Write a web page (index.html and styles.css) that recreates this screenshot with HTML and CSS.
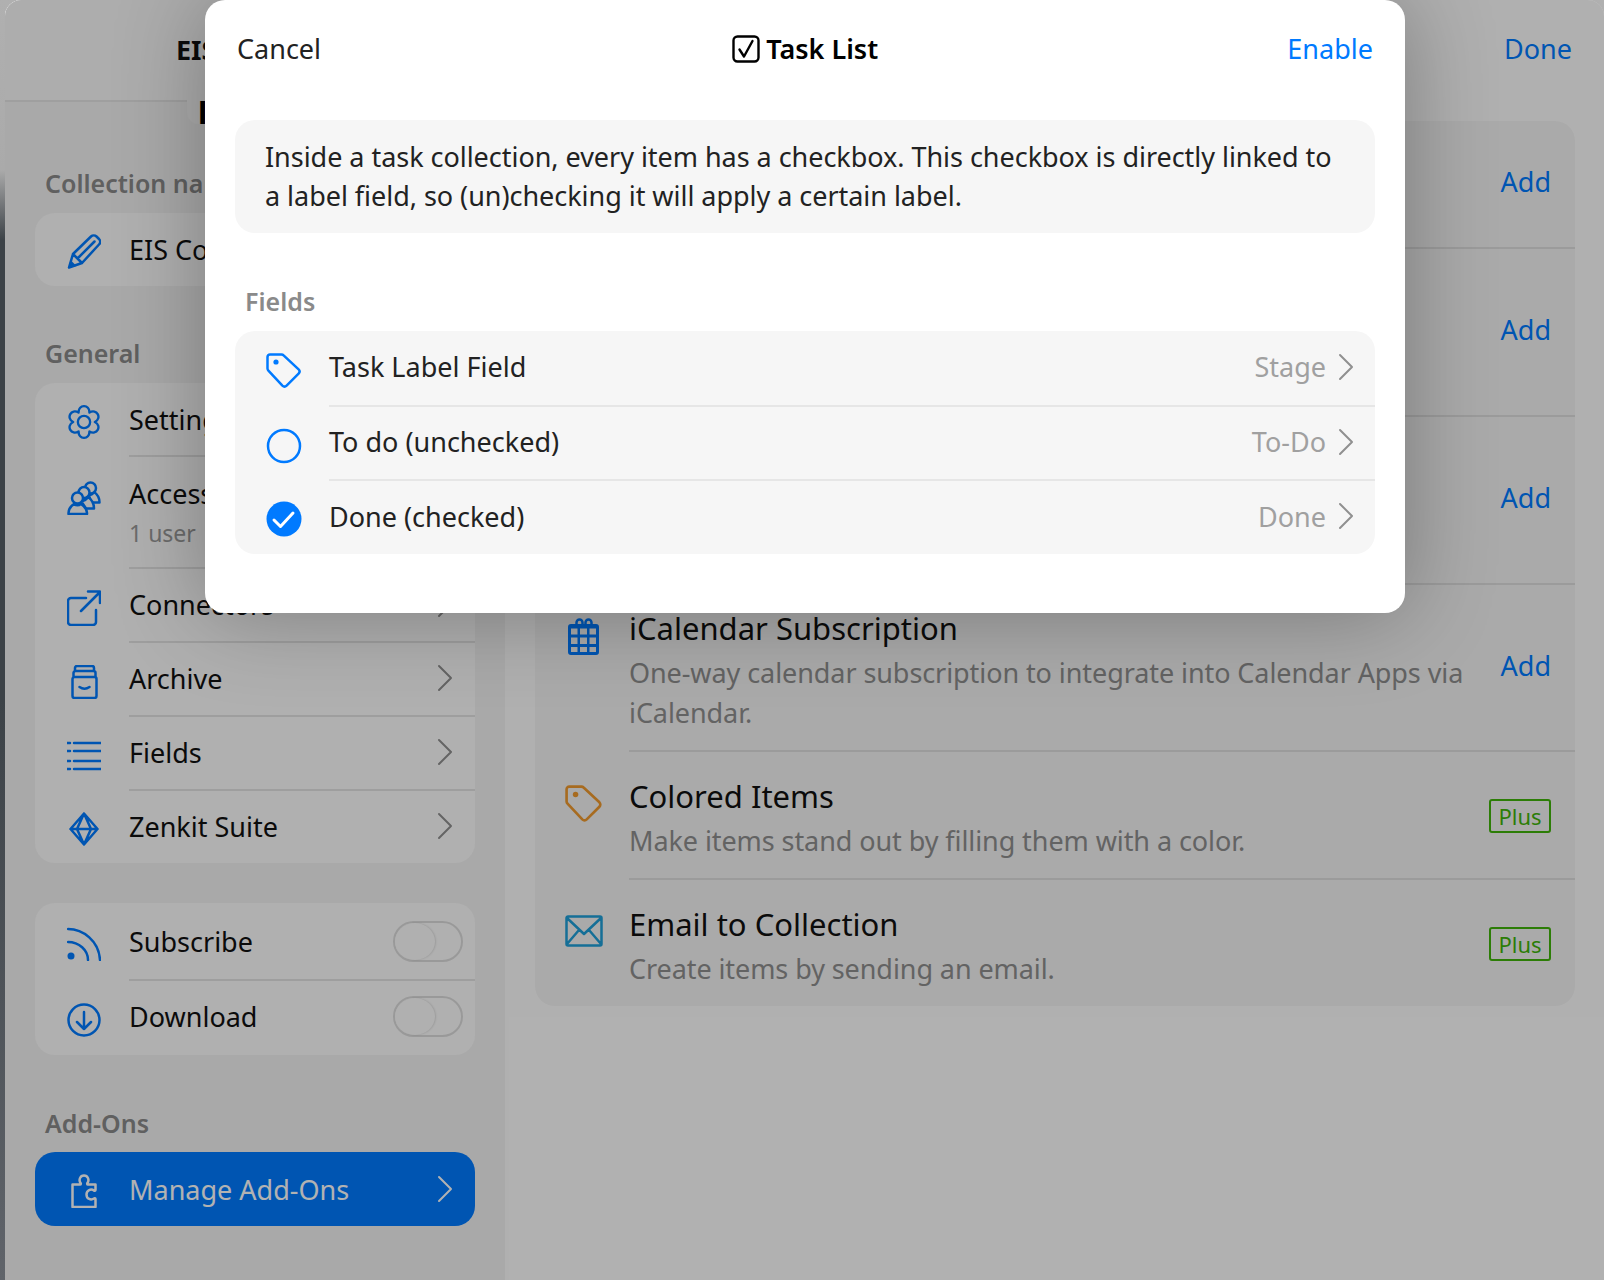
FILE: index.html
```html
<!DOCTYPE html>
<html lang="en">
<head>
    <meta charset="utf-8">
    <link rel="stylesheet" href="styles.css">
    <title>Manage Add-Ons</title>
</head>
<body>
    <svg class="defs" width="0" height="0">
        <symbol id="chev" viewBox="0 0 16 28"><path d="M2 2l12 12L2 26"/></symbol>
        <symbol id="tag" viewBox="0 0 36 36"><path d="M4 1.500H15.500a3 3 0 0 1 2.100.9L32.600 16.400a3 3 0 0 1 0 4.200L20.600 32.600a3 3 0 0 1-4.200 0L2.400 17.600a3 3 0 0 1-.9-2.100V4A2.500 2.500 0 0 1 4 1.500z"/><circle class="solid" cx="10" cy="9" r="2.600"/></symbol>
    </svg>

    <div class="app">
        <aside class="sidebar">
            <div class="side-head"><span class="side-title">EIS</span></div>
            <div class="name-pill">I</div>

            <h3 class="sec-label first">Collection name</h3>
            <div class="group">
                <div class="row one">
                    <div class="ico">
                        <svg width="34" height="36" viewBox="0 0 34 36"><path d="M2 34.500L6 21 24 3.500a4 4 0 0 1 5.500 0l2.500 2.500a4 4 0 0 1 0 5.500L15 30zM6 21l9 9M11 25L27.500 8.500"/><path class="solid" d="M1.500 35l2-8 6 6z"/></svg>
                    </div>
                    <div class="body"><span class="txt">EIS Collection</span></div>
                </div>
            </div>

            <h3 class="sec-label">General</h3>
            <div class="group">
                <div class="row">
                    <div class="ico">
                        <svg width="34" height="34" viewBox="-18 -18 36 36"><circle r="6.500"/><path d="M-5.750-9.960C-6.180-19.020 6.180-19.020 5.750-9.960 13.380-14.860 19.560-4.160 11.500 0 19.560 4.160 13.380 14.860 5.750 9.960 6.180 19.020-6.180 19.020-5.750 9.960-13.380 14.860-19.560 4.160-11.500 0-19.560-4.160-13.380-14.860-5.750-9.960z"/></svg>
                    </div>
                    <div class="body"><span class="txt">Settings</span></div>
                </div>
                <div class="row access">
                    <div class="ico top">
                        <svg width="34" height="34" viewBox="0 0 34 34"><path class="cut" d="M22 14c3 0 4-1 5-3 3 2 5.500 6 5.500 10.500H24z"/><circle class="cut" cx="23.500" cy="7" r="5.500"/><path class="cut" d="M14 20c3 0 5-1 7-4 3 2 6 6 6 11.500H19z"/><circle class="cut" cx="17" cy="11.500" r="5.500"/><path class="cut" d="M1.500 33v-1c0-4 2.500-7 5.500-9 2 1.500 5 1.500 7 0 3 2 6 5 6 9v1z"/><circle class="cut" cx="10.500" cy="17" r="5.500"/></svg>
                    </div>
                    <div class="body">
                        <div>
                            <div class="txt">Access</div>
                            <div class="sub">1 user</div>
                        </div>
                    </div>
                </div>
                <div class="row">
                    <div class="ico">
                        <svg width="34" height="36" viewBox="0 0 34 36"><path d="M19 8H4a3 3 0 0 0-3 3v21a3 3 0 0 0 3 3h22a3 3 0 0 0 3-3V20M14 21L33 2M21 1.500h12V13"/></svg>
                    </div>
                    <div class="body"><span class="txt">Connectors</span><svg class="chev"><use href="#chev"/></svg></div>
                </div>
                <div class="row">
                    <div class="ico">
                        <svg width="27" height="34" viewBox="0 0 27 34"><path d="M4 6V3a2 2 0 0 1 2-2h15a2 2 0 0 1 2 2v3M2.500 12V8a2 2 0 0 1 2-2h18a2 2 0 0 1 2 2v4M1.500 14a2 2 0 0 1 2-2h20a2 2 0 0 1 2 2v17a2 2 0 0 1-2 2H3.500a2 2 0 0 1-2-2zM8.500 22c3 2 7 2 10 0"/></svg>
                    </div>
                    <div class="body"><span class="txt">Archive</span><svg class="chev"><use href="#chev"/></svg></div>
                </div>
                <div class="row">
                    <div class="ico">
                        <svg width="34" height="30" viewBox="0 0 34 30"><path d="M7 2h27M7 10h27M7 20h27M7 28h27M0 2h3M0 10h3M0 20h3M0 28h3"/></svg>
                    </div>
                    <div class="body"><span class="txt">Fields</span><svg class="chev"><use href="#chev"/></svg></div>
                </div>
                <div class="row short">
                    <div class="ico">
                        <svg width="30" height="34" viewBox="0 0 30 34"><path d="M15 1.500L28.500 17 15 32.500 1.500 17zM1.500 17h27M15 1.500l-7 15.500 7 15.500 7-15.500z"/></svg>
                    </div>
                    <div class="body"><span class="txt">Zenkit Suite</span><svg class="chev"><use href="#chev"/></svg></div>
                </div>
            </div>

            <div class="group spaced">
                <div class="row tall">
                    <div class="ico">
                        <svg width="34" height="34" viewBox="0 0 34 34"><path d="M1 2c15 0 31 12 32 31M1 15c11 0 20 8 20 18"/><circle class="solid" cx="4" cy="29" r="3.500"/></svg>
                    </div>
                    <div class="body"><span class="txt">Subscribe</span><span class="toggle"><span class="knob"></span></span></div>
                </div>
                <div class="row">
                    <div class="ico">
                        <svg width="34" height="34" viewBox="0 0 34 34"><circle cx="17" cy="17" r="15.500"/><path d="M17 9v17M10 19l7 7 7-7"/></svg>
                    </div>
                    <div class="body lift"><span class="txt">Download</span><span class="toggle"><span class="knob"></span></span></div>
                </div>
            </div>

            <h3 class="sec-label addons">Add-Ons</h3>
            <div class="group active">
                <div class="row">
                    <div class="ico">
                        <svg width="26" height="34" viewBox="0 0 26 34"><path d="M1.500 10.500H9c1 0 1-1 .5-1.500-2-3-.5-7.500 3.500-7.500s5.500 4.500 3.500 7.500c-.5.5-.5 1.500.5 1.500h7.500V16c0 1-1 1-1.500.5-3-2-7.500-.5-7.500 4s4.500 6 7.500 4c.5-.5 1.500-.5 1.500.5v8h-23z"/></svg>
                    </div>
                    <div class="body"><span class="txt">Manage Add-Ons</span><svg class="chev"><use href="#chev"/></svg></div>
                </div>
            </div>
        </aside>

        <main class="content">
            <div class="content-head"><span class="done">Done</span></div>
            <div class="card">
                <div class="item short"><div class="item-ico"></div><div class="item-body"><div class="item-text"></div><span class="add">Add</span></div></div>
                <div class="item"><div class="item-ico"></div><div class="item-body"><div class="item-text"></div><span class="add">Add</span></div></div>
                <div class="item"><div class="item-ico"></div><div class="item-body"><div class="item-text"></div><span class="add">Add</span></div></div>
                <div class="item cal-row">
                    <div class="item-ico">
                        <svg class="cal" width="32" height="38" viewBox="0 0 32 38"><path class="cal-body" d="M3 6h25a3 3 0 0 1 3 3v25a3 3 0 0 1-3 3H3a3 3 0 0 1-3-3V9a3 3 0 0 1 3-3zM3 10.500v6h6.500v-6zM12 10.500v6h7v-6zM21.500 10.500v6H28v-6zM3 19.500v6.500h6.500v-6.500zM12 19.500v6.500h7v-6.500zM21.500 19.500v6.500H28v-6.500zM3 29v5h6.500v-5zM12 29v5h7v-5zM21.500 29v5H28v-5z"/><path d="M8.500 7V4.500a3 3 0 0 1 6 0V7M17.500 7V4.500a3 3 0 0 1 6 0V7"/></svg>
                    </div>
                    <div class="item-body">
                        <div class="item-text">
                            <div class="item-title">iCalendar Subscription</div>
                            <div class="item-desc">One-way calendar subscription to integrate into Calendar Apps via iCalendar.</div>
                        </div>
                        <span class="add">Add</span>
                    </div>
                </div>
                <div class="item">
                    <div class="item-ico">
                        <svg class="orange" width="38" height="38"><use href="#tag"/></svg>
                    </div>
                    <div class="item-body">
                        <div class="item-text">
                            <div class="item-title">Colored Items</div>
                            <div class="item-desc">Make items stand out by filling them with a color.</div>
                        </div>
                        <span class="plus">Plus</span>
                    </div>
                </div>
                <div class="item">
                    <div class="item-ico">
                        <svg class="teal" width="38" height="32" viewBox="0 0 38 32"><path d="M3 1.500h32a1.500 1.500 0 0 1 1.500 1.500v26a1.500 1.500 0 0 1-1.500 1.500H3A1.500 1.500 0 0 1 1.500 29V3A1.500 1.500 0 0 1 3 1.500zM2 3l17 16L36 3M2 29l12-14M36 29L24 15"/></svg>
                    </div>
                    <div class="item-body">
                        <div class="item-text">
                            <div class="item-title">Email to Collection</div>
                            <div class="item-desc">Create items by sending an email.</div>
                        </div>
                        <span class="plus">Plus</span>
                    </div>
                </div>
            </div>
        </main>

        <div class="dim"></div>
    </div>

    <section class="modal">
        <header class="modal-head">
            <span class="cancel">Cancel</span>
            <span class="modal-title">
                <svg class="box" width="28" height="28" viewBox="0 0 28 28"><rect x="1.500" y="1.500" width="25" height="25" rx="4"/><path d="M7.500 14.500l4.500 7L20.500 6"/></svg>
                Task List
            </span>
            <span class="enable">Enable</span>
        </header>
        <p class="info">Inside a task collection, every item has a checkbox. This checkbox is directly linked to a label field, so (un)checking it will apply a certain label.</p>
        <h3 class="fields-label">Fields</h3>
        <div class="m-group">
            <div class="m-row">
                <div class="m-ico"><svg class="blue" width="36" height="36"><use href="#tag"/></svg></div>
                <div class="m-body"><span>Task Label Field</span><span class="val">Stage</span><svg class="chev"><use href="#chev"/></svg></div>
            </div>
            <div class="m-row">
                <div class="m-ico"><svg class="blue" width="36" height="36" viewBox="0 0 36 36"><circle cx="18" cy="18" r="16"/></svg></div>
                <div class="m-body"><span>To do (unchecked)</span><span class="val">To-Do</span><svg class="chev"><use href="#chev"/></svg></div>
            </div>
            <div class="m-row">
                <div class="m-ico"><svg class="blue" width="36" height="36" viewBox="0 0 36 36"><circle class="solid" cx="18" cy="18" r="17.500"/><path class="tick" d="M8 19l6.500 6.500L27 12"/></svg></div>
                <div class="m-body"><span>Done (checked)</span><span class="val">Done</span><svg class="chev"><use href="#chev"/></svg></div>
            </div>
        </div>
    </section>
</body>
</html>
```

FILE: styles.css
```css
* {
    box-sizing: border-box;
}

body {
    margin: 0;
    height: 1280px;
    overflow: hidden;
    font-family: "Noto Sans", sans-serif;
    font-size: 27px;
    color: #111;
    background: linear-gradient(to bottom, #b0b0b0 0, #aaa 170px, #3c4247 240px, #3c4247 700px, #60646a 1280px);
}

svg {
    fill: none;
    stroke: currentColor;
    stroke-width: 2.5;
    stroke-linecap: round;
    stroke-linejoin: round;
}

.defs {
    position: absolute;
}

.solid {
    fill: currentColor;
    stroke: none;
}

.cut {
    fill: #fcfcfc;
}

.chev {
    width: 16px;
    height: 28px;
    color: #909090;
    stroke-width: 2;
    flex-shrink: 0;
}

/* app behind the sheet */
.app {
    position: relative;
    margin-left: 5px;
    height: 1280px;
    display: flex;
    overflow: hidden;
    border-radius: 16px 16px 0 0;
    background: #fdfdfd;
}

.dim {
    position: absolute;
    inset: 0;
    background: rgba(0, 0, 0, 0.3);
}

.sidebar {
    position: relative;
    width: 500px;
    padding: 0 30px;
    background: #f3f3f3;
}

.side-head {
    height: 102px;
    margin: 0 -30px;
    padding: 31px 0 0 171px;
    border-bottom: 2px solid #e4e4e4;
    background: #f8f8f8;
}

.side-title {
    font-weight: 700;
}

.name-pill {
    position: absolute;
    top: 98px;
    left: 182px;
    width: 60px;
    height: 26px;
    padding-left: 11px;
    border-radius: 0 0 12px 12px;
    background: #f8f8f8;
    font-family: "Liberation Sans", sans-serif;
    font-size: 34px;
    font-weight: 700;
    line-height: 28px;
    color: #000;
}

.sec-label {
    margin: 0;
    padding-left: 10px;
    height: 30px;
    font-size: 25px;
    line-height: 30px;
    font-weight: 600;
    color: #8a8a8a;
    white-space: nowrap;
}

.sec-label.first {
    margin-top: 66px;
    margin-bottom: 15px;
}

.sidebar .group + .sec-label {
    margin-top: 52px;
    margin-bottom: 15px;
}

.sidebar .group + .sec-label.addons {
    margin-top: 53px;
    margin-bottom: 14px;
}

.group {
    border-radius: 20px;
    background: #fcfcfc;
    overflow: hidden;
}

.group.spaced {
    margin-top: 40px;
}

.group.active {
    background: #007aff;
    color: #fff;
}

.group.active .ico,
.group.active .chev {
    color: #fff;
}

.row {
    display: flex;
    min-height: 74px;
}

.row.one {
    min-height: 73px;
}

.row.short {
    min-height: 72px;
}

.row.tall {
    min-height: 78px;
}

.row.access {
    min-height: 112px;
}

.ico {
    width: 94px;
    flex-shrink: 0;
    padding: 3px 0 0 4px;
    display: flex;
    align-items: center;
    justify-content: center;
    color: #007aff;
}

.ico.top {
    align-items: flex-start;
    padding-top: 24px;
}

.body {
    flex: 1;
    display: flex;
    align-items: center;
    justify-content: space-between;
    padding-right: 22px;
    border-bottom: 2px solid #e2e2e2;
}

.row:last-child .body {
    border-bottom: none;
}

.row.access ~ .row .body {
    padding-bottom: 2px;
}

.body.lift {
    padding-bottom: 4px;
}

.txt {
    white-space: nowrap;
}

.sub {
    margin-top: 5px;
    font-size: 23px;
    color: #9a9a9a;
}

.toggle {
    width: 70px;
    height: 41px;
    margin-right: -10px;
    border: 2px solid #dcdcdc;
    border-radius: 21px;
}

.knob {
    display: block;
    width: 40px;
    height: 37px;
    border-radius: 50%;
    box-shadow: 1px 0 2px rgba(0, 0, 0, 0.12);
    background: #fcfcfc;
}

/* right column */
.content {
    flex: 1;
    padding: 0 29px 0 30px;
}

.content-head {
    height: 121px;
    padding-top: 30px;
    padding-right: 3px;
    text-align: right;
}

.done {
    color: #007aff;
}

.card {
    border-radius: 20px;
    background: #f4f4f4;
}

.item {
    display: flex;
    height: 168px;
}

.item.short {
    height: 128px;
}

.item.cal-row {
    height: 167px;
}

.item:nth-child(5) {
    height: 128px;
}

.item:nth-child(6) {
    height: 126px;
}

.item-ico {
    width: 94px;
    flex-shrink: 0;
    padding: 33px 0 0 4px;
    display: flex;
    justify-content: center;
    align-items: flex-start;
}

.cal {
    color: #007aff;
}

.cal-body {
    fill: currentColor;
    fill-rule: evenodd;
    stroke: none;
}

.orange {
    color: #ef9a2e;
}

.teal {
    color: #1f9fd8;
    margin-top: 2px;
}

.item-body {
    flex: 1;
    display: flex;
    align-items: center;
    justify-content: space-between;
    padding-right: 24px;
    border-bottom: 2px solid #dedede;
}

.item:last-child .item-body {
    border-bottom: none;
}

.item-text {
    width: 850px;
    padding-top: 6px;
}

.item-title {
    font-size: 31px;
    line-height: 40px;
}

.item-desc {
    margin-top: 5px;
    font-size: 27px;
    line-height: 40px;
    letter-spacing: -0.08px;
    color: #8e8e8e;
}

.add {
    padding-bottom: 5px;
    color: #007aff;
}

.plus {
    width: 62px;
    height: 34px;
    margin-top: 2px;
    border: 2px solid #3fb30a;
    border-radius: 3px;
    font-size: 22px;
    line-height: 30px;
    text-align: center;
    color: #3fb30a;
}

/* sheet */
.modal {
    position: absolute;
    top: 0;
    left: 205px;
    width: 1200px;
    height: 613px;
    padding: 0 30px;
    border-radius: 20px;
    background: #fff;
    box-shadow: 0 0 90px rgba(0, 0, 0, 0.3);
    color: #222;
}

.modal-head {
    height: 120px;
    padding: 30px 2px 0;
    display: flex;
    justify-content: space-between;
}

.cancel,
.enable {
    line-height: 38px;
}

.enable {
    color: #007aff;
}

.modal-title {
    display: flex;
    align-items: flex-start;
    gap: 6px;
    margin-left: 2px;
    line-height: 38px;
    font-weight: 600;
    color: #000;
}

.box {
    margin-top: 5px;
    stroke-width: 2.400;
}

.info {
    margin: 0;
    height: 113px;
    padding: 17px 30px;
    border-radius: 20px;
    background: #f6f6f6;
    line-height: 39px;
    letter-spacing: -0.035px;
}

.fields-label {
    margin: 0;
    padding: 53px 0 15px 10px;
    font-size: 25px;
    line-height: 30px;
    font-weight: 600;
    color: #8a8a8a;
}

.m-group {
    border-radius: 20px;
    background: #f6f6f6;
    overflow: hidden;
}

.m-row {
    display: flex;
    height: 74px;
}

.m-row:first-child {
    height: 76px;
}

.m-row:last-child {
    height: 73px;
}

.m-ico {
    width: 94px;
    flex-shrink: 0;
    padding: 3px 0 0 4px;
    display: flex;
    align-items: center;
    justify-content: center;
}

.blue {
    color: #007aff;
}

.tick {
    stroke: #fff;
    stroke-width: 3;
}

.m-body {
    flex: 1;
    display: flex;
    align-items: center;
    gap: 12px;
    padding-right: 21px;
    padding-bottom: 3px;
    border-bottom: 2px solid #e6e6e6;
}

.m-row:last-child .m-body {
    border-bottom: none;
}

.m-body span:first-child {
    flex: 1;
}

.val {
    color: #a0a0a0;
}
```
